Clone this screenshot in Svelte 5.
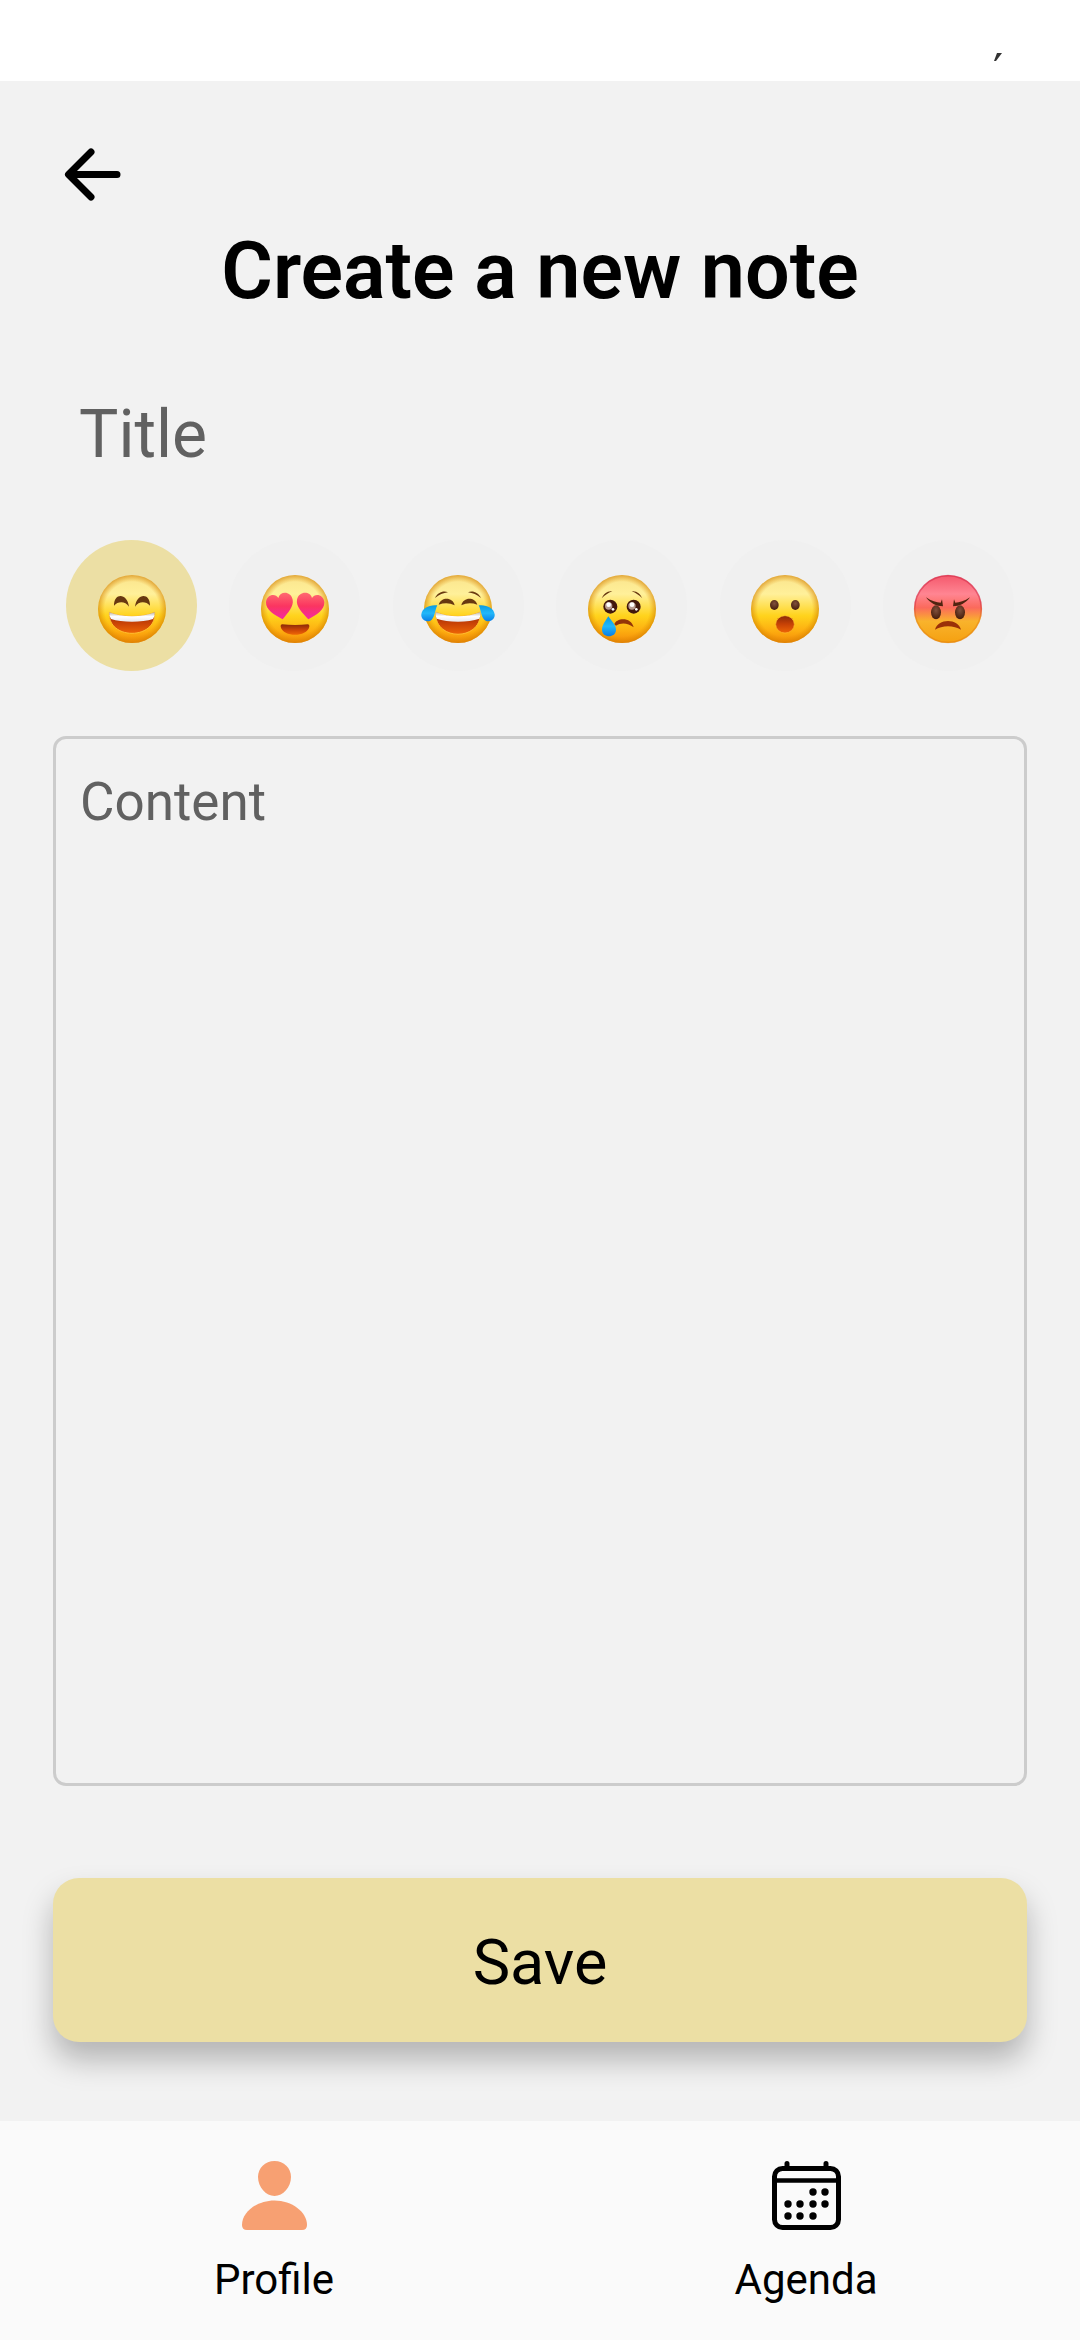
<script>
  const moods = ['Happy', 'In love', 'Laughing', 'Sad', 'Surprised', 'Angry'];

  let mood = $state('Happy');
  let title = $state('');
  let content = $state('');
</script>

<svelte:head>
  <title>Create a new note</title>
</svelte:head>

<!-- Gradients shared by the mood faces -->
<svg class="defs" width="0" height="0" aria-hidden="true">
  <defs>
    <linearGradient id="face" x1="0" y1="0" x2="0" y2="1">
      <stop offset="0" stop-color="#fae48c" />
      <stop offset=".28" stop-color="#fff09a" />
      <stop offset=".6" stop-color="#ffd31c" />
      <stop offset=".82" stop-color="#fdae10" />
      <stop offset="1" stop-color="#f48a08" />
    </linearGradient>
    <linearGradient id="rage" x1="0" y1="0" x2="0" y2="1">
      <stop offset="0" stop-color="#f4586c" />
      <stop offset=".28" stop-color="#ff8592" />
      <stop offset=".48" stop-color="#fb6a5c" />
      <stop offset=".68" stop-color="#f9b32c" />
      <stop offset="1" stop-color="#f5a010" />
    </linearGradient>
    <radialGradient id="rim" cx=".5" cy=".5" r=".5">
      <stop offset=".8" stop-color="#e08a00" stop-opacity="0" />
      <stop offset="1" stop-color="#d07c00" stop-opacity=".6" />
    </radialGradient>
    <linearGradient id="rageRim" x1="0" y1="0" x2="0" y2="1">
      <stop offset=".4" stop-color="#c81c3c" />
      <stop offset=".65" stop-color="#e07c10" />
    </linearGradient>
    <linearGradient id="mouth" x1="0" y1="0" x2="0" y2="1">
      <stop offset="0" stop-color="#8a2a08" />
      <stop offset=".5" stop-color="#c84206" />
      <stop offset="1" stop-color="#ee6606" />
    </linearGradient>
    <linearGradient id="heart" x1="0" y1="0" x2="0" y2="1">
      <stop offset="0" stop-color="#ff6a70" />
      <stop offset=".5" stop-color="#fb3560" />
      <stop offset="1" stop-color="#f428a4" />
    </linearGradient>
    <linearGradient id="tear" x1="0" y1="0" x2="0" y2="1">
      <stop offset="0" stop-color="#0a9be0" />
      <stop offset=".5" stop-color="#22b8fa" />
      <stop offset="1" stop-color="#0a7ee6" />
    </linearGradient>
    <radialGradient id="eye" cx=".5" cy=".35" r=".6">
      <stop offset="0" stop-color="#80503c" />
      <stop offset="1" stop-color="#4a200e" />
    </radialGradient>
    <linearGradient id="teeth" x1="0" y1="0" x2="0" y2="1">
      <stop offset="0" stop-color="#bcb6a6" />
      <stop offset=".45" stop-color="#ffffff" />
      <stop offset="1" stop-color="#e8e8ee" />
    </linearGradient>
  </defs>
</svg>

<div class="screen">
  <header class="status">
    <svg width="8" height="9" viewBox="0 0 8 9" aria-hidden="true">
      <path d="M3 0H8L2 8H0Z" fill="#333" />
    </svg>
  </header>

  <main>
    <button class="back" type="button" aria-label="Back">
      <svg viewBox="0 0 79 79" aria-hidden="true">
        <path d="M64 39.500H16M38 17L15.500 39.500L38 62" fill="none" stroke="#000" stroke-width="7" stroke-linecap="round" stroke-linejoin="round" />
      </svg>
    </button>

    <h1>Create a new note</h1>

    <input class="title" type="text" placeholder="Title" aria-label="Title" bind:value={title} />

    <div class="moods" role="group" aria-label="Mood">
      {#each moods as name}
        <button type="button" class="mood" class:selected={mood === name} aria-label={name} aria-pressed={mood === name} onclick={() => (mood = name)}>
          <svg viewBox="-120 -129 240 240" aria-hidden="true">
            <circle r="102" fill={name === 'Angry' ? 'url(#rage)' : 'url(#face)'} />
            {#if name === 'Angry'}
              <circle r="100" fill="none" stroke="url(#rageRim)" stroke-width="5" opacity=".45" />
            {:else}
              <circle r="102" fill="url(#rim)" />
            {/if}
            {#if name === 'Happy'}
              <path d="M-54-10C-55-49-14-49-9-7C-20-24-42-24-54-10Z" fill="#683810" />
              <path d="M54-10C55-49 14-49 9-7C20-24 42-24 54-10Z" fill="#683810" />
              <path d="M-68 10C-30 26 30 26 68 10C74 94-74 94-68 10Z" fill="url(#mouth)" stroke="#ffbe30" stroke-width="3" />
              <path d="M-68 10C-30 26 30 26 68 10Q69 23 63 30C30 41-30 41-63 30Q-69 23-68 10Z" fill="url(#teeth)" />
            {:else if name === 'In love'}
              <path d="M-37 31C-62 18-88 2-87-20C-86-43-59-49-50-33C-45-54-13-55-7-28C-3-8-22 12-37 31Z" fill="url(#heart)" />
              <path d="M40 31C65 18 89 2 88-20C87-43 60-49 51-33C46-54 12-55 6-28C2-8 23 12 40 31Z" fill="url(#heart)" />
              <path d="M-39 46Q0 50 39 46Q44 47 43 53C35 85-35 85-43 53Q-44 47-39 46Z" fill="url(#mouth)" />
            {:else if name === 'Laughing'}
              <path d="M-69-33C-61-51-42-57-30-50C-44-48-57-43-69-33Z" fill="#683810" />
              <path d="M69-33C61-51 42-57 30-50C44-48 57-43 69-33Z" fill="#683810" />
              <path d="M-58-13C-50-38-15-36-10-11C-25-19-42-19-58-13Z" fill="#683810" />
              <path d="M58-13C50-38 15-36 10-11C25-19 42-19 58-13Z" fill="#683810" />
              <path d="M-67 9C-30 26 30 26 67 9C72 98-72 98-67 9Z" fill="url(#mouth)" stroke="#ffbe30" stroke-width="3" />
              <path d="M-67 9C-30 26 30 26 67 9Q68 21 64 29C30 41-30 41-64 29Q-68 21-67 9Z" fill="url(#teeth)" />
              <path d="M-62-11C-85-14-108-3-110 16C-112 34-91 43-79 32C-69 22-70 6-62-11Z" fill="url(#tear)" />
              <path d="M62-11C85-14 108-3 110 16C112 34 91 43 79 32C69 22 70 6 62-11Z" fill="url(#tear)" />
            {:else if name === 'Sad'}
              <path d="M-61-32C-55-47-42-56-29-53C-42-48-51-42-61-32Z" fill="#683810" />
              <path d="M61-32C55-47 42-56 29-53C42-48 51-42 61-32Z" fill="#683810" />
              <circle cx="-35" cy="-7" r="21" fill="#42180c" />
              <circle cx="35" cy="-7" r="21" fill="#42180c" />
              <circle cx="-40" cy="-9" r="11" fill="#b89c92" />
              <circle cx="30" cy="-9" r="11" fill="#b89c92" />
              <circle cx="-40" cy="-13" r="7" fill="#fff" />
              <circle cx="30" cy="-13" r="7" fill="#fff" />
              <circle cx="-27" cy="1" r="4" fill="#fff" />
              <circle cx="43" cy="1" r="4" fill="#fff" />
              <path d="M-23 46C-18 26 28 22 35 55C18 42-2 40-18 50Z" fill="#943408" />
              <path d="M-41 22C-50 37-60 48-60 62C-60 88-18 88-18 62C-18 48-31 37-41 22Z" fill="url(#tear)" />
            {:else if name === 'Surprised'}
              <ellipse cx="-32" cy="-12" rx="13" ry="15" fill="url(#eye)" />
              <ellipse cx="31" cy="-12" rx="13" ry="15" fill="url(#eye)" />
              <ellipse cy="46" rx="28" ry="26" fill="url(#mouth)" stroke="#ffbe30" stroke-width="2" />
            {:else}
              <path d="M-66-35C-50-23-34-20-22-19L-18-29L-15-8C-34-8-55-18-66-35Z" fill="#502410" />
              <path d="M66-35C50-23 34-20 22-19L18-29L15-8C34-8 55-18 66-35Z" fill="#502410" />
              <ellipse cx="-36" cy="10" rx="15" ry="21" fill="url(#eye)" />
              <ellipse cx="36" cy="10" rx="15" ry="21" fill="url(#eye)" />
              <path d="M-39 62C-31 27 31 27 39 62C18 48-18 48-39 62Z" fill="#9a3008" />
            {/if}
          </svg>
        </button>
      {/each}
    </div>

    <textarea class="content" placeholder="Content" aria-label="Content" bind:value={content}></textarea>

    <button class="save" type="button">Save</button>
  </main>

  <nav>
    <a href="#profile">
      <svg viewBox="0 0 69 69" aria-hidden="true">
        <path d="M34.500 0C44 0 51 7 51 16C51 26 43 35 34.500 35C26 35 18 26 18 16C18 7 25 0 34.500 0Z" fill="#f7a072" />
        <path d="M34.500 39.500C52 39.500 67 51 67 64Q67 69 62 69H7Q2 69 2 64C2 51 17 39.500 34.500 39.500Z" fill="#f7a072" />
      </svg>
      <span>Profile</span>
    </a>
    <a href="#agenda">
      <svg viewBox="0 0 69 69" aria-hidden="true">
        <rect x="2.500" y="7.500" width="64" height="59" rx="8" fill="none" stroke="#000" stroke-width="5" />
        <path d="M2 19.500H67" stroke="#000" stroke-width="4.500" />
        <path d="M15 2.500V7M54 2.500V7" stroke="#000" stroke-width="5" stroke-linecap="round" />
        {#each [[41, 31], [53, 31], [16, 43], [28, 43], [41, 43], [53, 43], [16, 55], [28, 55], [41, 55]] as [x, y]}
          <circle cx={x} cy={y} r="3.700" />
        {/each}
      </svg>
      <span>Agenda</span>
    </a>
  </nav>
</div>

<style>
  :global(body) {
    margin: 0;
    background: #f2f2f2;
  }

  .defs {
    position: absolute;
  }

  .screen {
    display: flex;
    flex-direction: column;
    min-height: 100vh;
    font-family: Roboto, "Liberation Sans", sans-serif;
    color: #000;
    background: #f2f2f2;
  }

  .status {
    display: flex;
    justify-content: flex-end;
    box-sizing: border-box;
    height: 81px;
    padding: 53px 78px 0 0;
    background: #fff;
  }

  main {
    flex: 1;
    display: flex;
    flex-direction: column;
    padding: 54px 53px 79px;
  }

  button,
  input,
  textarea {
    margin: 0;
    border: 0;
    font-family: inherit;
    color: inherit;
  }

  button {
    cursor: pointer;
  }

  svg {
    display: block;
  }

  .back {
    align-self: flex-start;
    width: 79px;
    height: 79px;
    padding: 0;
    background: none;
  }

  h1 {
    margin: 11px 0 53px;
    font-size: 79px;
    line-height: 92px;
    font-weight: 600;
    text-align: center;
  }

  .title {
    height: 129px;
    padding: 0 26px;
    font-size: 66px;
    background: none;
  }

  ::placeholder {
    color: #616161;
    opacity: 1;
  }

  .moods {
    display: flex;
    justify-content: space-between;
    margin: 41px 0 65px;
    padding: 0 13px;
  }

  .mood {
    display: flex;
    align-items: center;
    justify-content: center;
    width: 131px;
    height: 131px;
    padding: 0;
    border-radius: 50%;
    background: #f0f0f0;
  }

  .mood.selected {
    background: #ecdfa4;
  }

  .mood svg {
    width: 80px;
    height: 80px;
  }

  .content {
    flex: 1;
    padding: 32px 24px;
    border: 3px solid #ccc;
    border-radius: 13px;
    font-size: 53px;
    line-height: 62px;
    background: none;
    resize: none;
  }

  .save {
    margin-top: 92px;
    padding: 48px 0 42px;
    border-radius: 26px;
    font-size: 63px;
    line-height: 74px;
    background: #ecdfa4;
    box-shadow: 0 18px 30px rgba(0, 0, 0, 0.26);
  }

  nav {
    display: grid;
    grid-template-columns: 1fr 1fr;
    padding: 40px 8px 35px;
    background: #fafafa;
  }

  nav a {
    display: flex;
    flex-direction: column;
    align-items: center;
    gap: 25px;
    font-size: 42px;
    line-height: 50px;
    color: inherit;
    text-decoration: none;
  }

  nav svg {
    width: 69px;
    height: 69px;
  }
</style>
